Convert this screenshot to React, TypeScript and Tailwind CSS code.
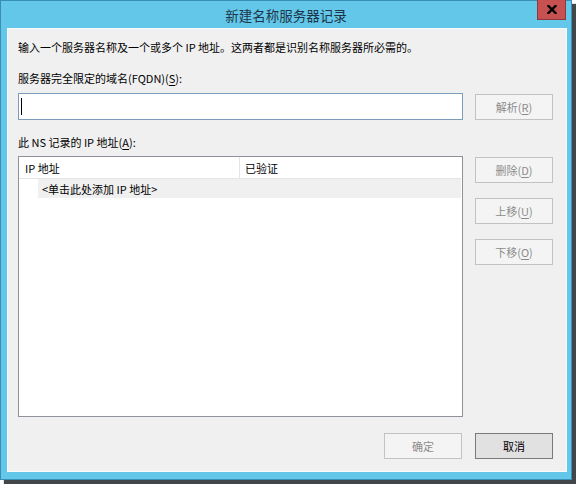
import React from "react";

const font = "font-['Noto_Sans_CJK_SC','Noto_Sans',sans-serif]";

function Btn({
  children,
  disabled,
  primary,
  className = "",
}: {
  children: React.ReactNode;
  disabled?: boolean;
  primary?: boolean;
  className?: string;
}) {
  const look = disabled
    ? "border-[#c2c2c2] bg-[#f4f4f4] text-[#8c8c8c]"
    : primary
    ? "border-[#7a7a7a] bg-[#e1e1e1] text-black"
    : "border-[#adadad] bg-[#e1e1e1] text-black";
  return (
    <div
      className={`w-[78px] h-[26px] border flex items-center justify-center text-[11px] leading-none ${look} ${className}`}
    >
      {children}
    </div>
  );
}

const Key = ({ k }: { k: string }) => <span className="underline underline-offset-2">{k}</span>;

export default function App() {
  return (
    <div className={`w-[576px] h-[484px] bg-white ${font}`}>
      {/* Window frame */}
      <div className="w-[572px] h-[480px] bg-[#63c7e9] border border-[#3a8db3] shadow-[4px_4px_1px_rgba(30,38,42,0.85)] flex flex-col">
        {/* Title bar */}
        <div className="h-[27px] flex items-start">
          <div className="w-[34px]" />
          <div className="flex-1 text-center text-[13.5px] leading-[20px] mt-[4px] text-[#1d3548]">
            新建名称服务器记录
          </div>
          <div className="w-[34px] flex">
            <div className="-mt-px w-[29px] h-[20px] bg-[#c75050] border border-[#8f3838] border-t-0 flex items-center justify-center">
              <svg width="10" height="9" viewBox="0 0 10 9">
                <path d="M1.5 1 L8.5 8 M8.5 1 L1.5 8" stroke="#000" strokeWidth="2.4" strokeLinecap="square" />
              </svg>
            </div>
          </div>
        </div>

        {/* Client area */}
        <div className="ml-[6px] mr-[4px] mb-[7px] flex-1 bg-[#f0f0f0] border border-[#f8fcfe] pl-[10px] pr-[13px] pt-[10px] flex flex-col text-[11px] leading-[16px] text-black">
          <p>输入一个服务器名称及一个或多个 IP 地址。这两者都是识别名称服务器所必需的。</p>

          <p className="mt-[15px]">
            服务器完全限定的域名(FQDN)(<Key k="S" />):
          </p>

          <div className="mt-[7px] flex items-start gap-[12px]">
            <div className="flex-1 h-[27px] bg-white border border-[#7d9bba] flex items-center pl-[2px]">
              <div className="w-px h-[17px] bg-black" />
            </div>
            <Btn disabled className="mt-px">
              解析(<Key k="R" />)
            </Btn>
          </div>

          <p className="mt-[14px]">
            此 NS 记录的 IP 地址(<Key k="A" />):
          </p>

          <div className="mt-[6px] flex items-start gap-[12px]">
            {/* List view */}
            <div className="flex-1 h-[261px] bg-white border border-[#8e9399] pr-px">
              <div className="h-[22px] flex border-b border-[#e5e5e5]">
                <div className="w-[221px] border-r border-[#e5e5e5] pl-[6px] flex items-center">IP 地址</div>
                <div className="flex-1 pl-[5px] flex items-center">已验证</div>
              </div>
              <div className="ml-[19px] h-[19px] bg-[#f0f0f0] pl-[4px] flex items-center">
                &lt;单击此处添加 IP 地址&gt;
              </div>
            </div>

            <div className="mt-px flex flex-col gap-[15px]">
              <Btn disabled>
                删除(<Key k="D" />)
              </Btn>
              <Btn disabled>
                上移(<Key k="U" />)
              </Btn>
              <Btn disabled>
                下移(<Key k="O" />)
              </Btn>
            </div>
          </div>

          <div className="mt-[16px] flex justify-end gap-[13px]">
            <Btn disabled className="h-[25px]">确定</Btn>
            <Btn primary className="h-[25px]">取消</Btn>
          </div>
        </div>
      </div>
    </div>
  );
}
